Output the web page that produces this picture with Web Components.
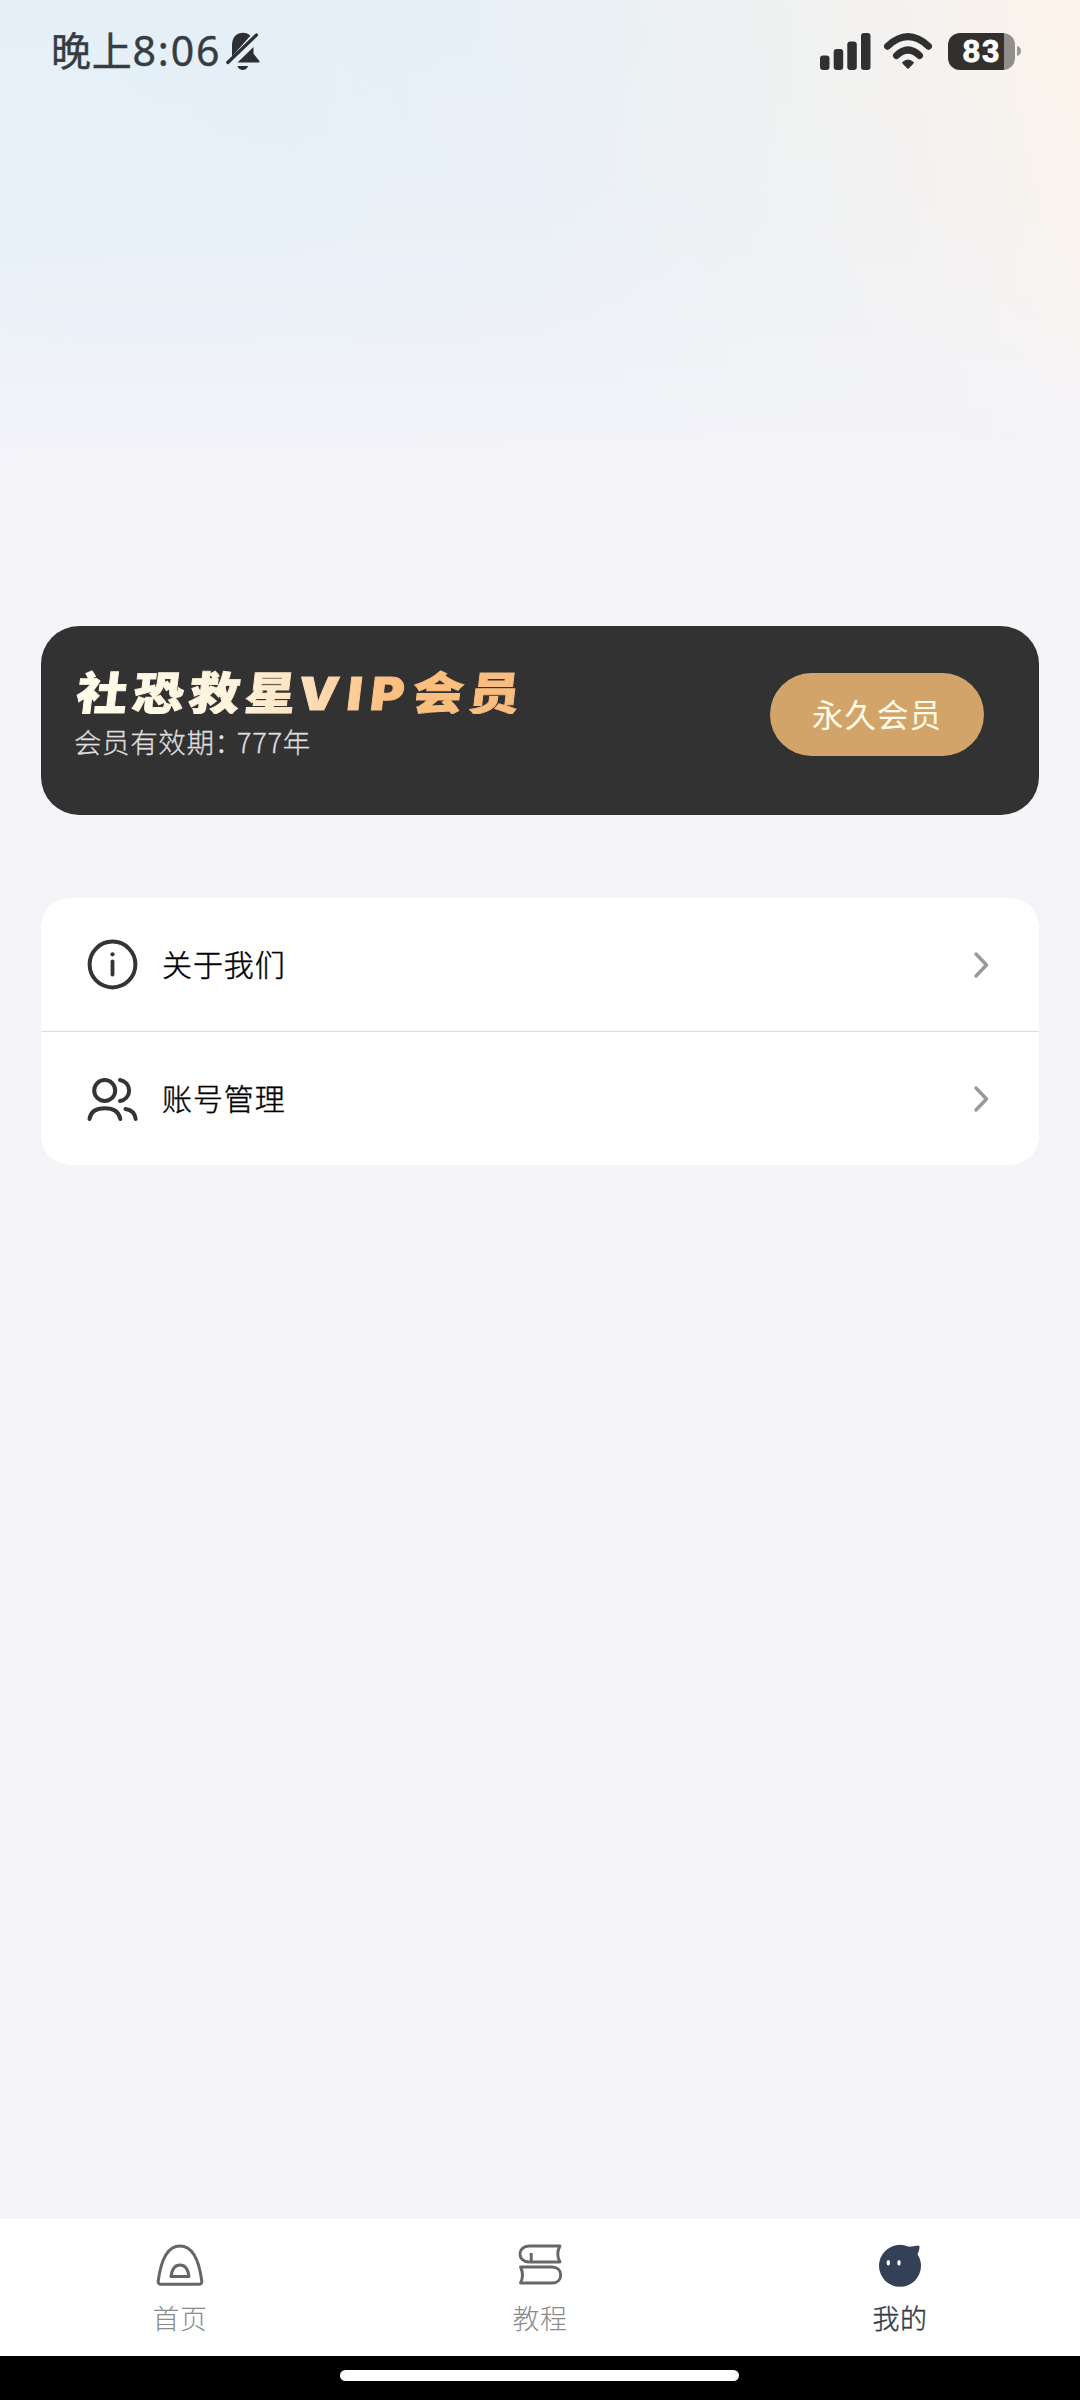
<!DOCTYPE html>
<html lang="zh-CN">
<head>
<meta charset="utf-8">
<title>我的</title>
<style>
html,body{margin:0;padding:0;background:#f4f4f9}
body{width:1080px;height:2400px;overflow:hidden;font-family:"Noto Sans CJK SC",sans-serif}
</style>
</head>
<body>
<profile-page></profile-page>
<script>
const define = (name, html) => {
  const t = document.createElement('template');
  t.innerHTML = html;
  customElements.define(name, class extends HTMLElement {
    constructor() {
      super();
      this.attachShadow({mode: 'open'}).append(t.content.cloneNode(true));
    }
  });
};

define('status-bar', `
<style>
:host{display:flex;height:102px;box-sizing:border-box;padding:0 59px 0 51px;justify-content:space-between;align-items:center;color:#363c42}
.side{display:flex;align-items:center;height:102px}
.time{display:flex;align-items:baseline;font-size:40px;line-height:60px;white-space:nowrap;margin-bottom:3px;-webkit-text-stroke:.4px #363c42}
.zh{letter-spacing:.8px}
.num{font-family:"Noto Sans","Noto Sans CJK SC",sans-serif;font-size:41px;letter-spacing:1.8px}
svg{display:block}
.battery{display:flex;align-items:center;margin-left:16px}
.cell{display:flex;align-items:center;justify-content:center;box-sizing:border-box;width:67px;height:37px;padding-left:1px;border-radius:12px;background:linear-gradient(90deg,#332f2d 56px,#918e8b 56px);color:#fff;font:700 31px/37px "Liberation Sans",sans-serif;letter-spacing:2px;-webkit-text-stroke:.8px #fff}
</style>
<div class="side">
  <div class="time"><span class="zh">晚上</span><span class="num">8:06</span></div>
  <svg width="34" height="39" viewBox="0 0 34 39" style="margin-left:5px"><g fill="#2c3033"><path d="M6 24V13C6 5 11 .8 17 .8c3 0 5.500 1 7.400 3L6 24.500z"/><path d="M11.500 30.500L27.500 15v6.500l5.800 7.500c.7 1 .2 1.500-.7 1.500z"/><path d="M11.500 34h10.500c-1.300 5.300-9.200 5.300-10.500 0z"/></g><path d="M1.800 30.500L30.500 3" stroke="#2c3033" stroke-width="3.200" stroke-linecap="round"/></svg>
</div>
<div class="side">
  <svg width="51" height="37" viewBox="0 0 51 37" fill="#303030"><rect y="22.500" width="9.500" height="14.500" rx="3"/><rect x="13.700" y="16" width="9.500" height="21" rx="3"/><rect x="27.300" y="8.500" width="9.500" height="28.500" rx="3"/><rect x="41" width="9.500" height="37" rx="3"/></svg>
  <svg width="48" height="37" viewBox="0 0 48 37" style="margin-left:13px" fill="none" stroke="#303030"><path d="M3.500 12.500Q24-6.500 44.500 12.500" stroke-width="7" stroke-linecap="round" transform="translate(0 .7)"/><path d="M12.500 22.500Q24 11.500 35.500 22.500" stroke-width="7" stroke-linecap="round"/><path d="M18.500 29.500Q24 24.500 29.500 29.500Q29 31 24 35.500Q19 31 18.500 29.500z" fill="#303030" stroke-width="1"/></svg>
  <div class="battery"><div class="cell">83</div><svg width="6" height="12" viewBox="0 0 6 12"><path d="M2 1Q6 2 6 6T2 11z" fill="#999693"/></svg></div>
</div>`);

define('vip-card', `
<style>
:host{display:flex;box-sizing:border-box;height:189px;padding:0 55px 0 34px;border-radius:38px;background:#323232;justify-content:space-between;align-items:flex-start}
.info{display:flex;flex-direction:column;padding-top:37px}
.title{display:flex;width:456px;height:54px;align-items:baseline;margin-left:2px;font-weight:900;font-size:51px;line-height:54px;white-space:nowrap;letter-spacing:5.200px;color:transparent;-webkit-text-stroke:1px transparent;background:linear-gradient(90deg,#fffdec 0,#fff3dc 35%,#fde0bc 50%,#fdbf80 68%,#f7bd7e 100%);-webkit-background-clip:text;background-clip:text;transform:scaleY(.89) skewX(-6deg)}
.en{font-family:Inter,sans-serif;font-size:51px;letter-spacing:8.500px;margin-left:-3px}
.term{color:#dedede;font-size:27.500px;font-weight:300;line-height:36px;letter-spacing:.6px;margin:6px 0 0 -1px;white-space:nowrap;-webkit-text-stroke:.3px #dedede}
.colon{font-feature-settings:"halt";margin-right:8px}
.pill{display:flex;align-items:center;justify-content:center;box-sizing:border-box;width:214px;height:83px;padding-bottom:3px;margin-top:47px;border-radius:41.500px;background:#d3a469;color:#fffbe8;font-size:31.500px;letter-spacing:1px}
</style>
<div class="info">
  <div class="title"><span>社恐救星</span><span class="en">VIP</span><span>会员</span></div>
  <div class="term">会员有效期<span class="colon">：</span>777年</div>
</div>
<div class="pill"><slot></slot></div>`);

define('menu-row', `
<style>
:host{display:flex;box-sizing:border-box;height:133px;padding:0 49px 0 46px;align-items:center;background:#fff}
.label{flex:1;margin:0 0 3px 24px;color:#000;font-size:30px;font-weight:300;letter-spacing:.9px;line-height:44px;-webkit-text-stroke:.4px #000}
svg{display:block}
</style>
<slot name="icon"></slot>
<div class="label"><slot></slot></div>
<svg width="18" height="28" viewBox="0 0 18 28"><path d="M4 3L14.500 14L4 25" fill="none" stroke="#999" stroke-width="3.400" stroke-linecap="round" stroke-linejoin="round"/></svg>`);

define('menu-list', `
<style>
:host{display:flex;flex-direction:column;gap:1px;overflow:hidden;border-radius:28px;background:#dcdcdc}
</style><slot></slot>`);

define('tab-item', `
<style>
:host{display:flex;flex:1;flex-direction:column;align-items:center;padding-top:23px;color:#8b8b8b;font-size:27px;font-weight:300;line-height:40px;letter-spacing:.5px}
:host([active]){color:#333b4b;-webkit-text-stroke:.4px #333b4b}
.text{margin-top:10px}
</style><slot name="icon"></slot><div class="text"><slot></slot></div>`);

define('tab-bar', `
<style>:host{display:flex;height:137px;background:#fff}</style><slot></slot>`);

define('gesture-bar', `
<style>
:host{display:flex;height:44px;box-sizing:border-box;padding:14px 1px 0 0;justify-content:center;align-items:flex-start;background:#000}
.line{width:399px;height:11px;border-radius:6px;background:#fff}
</style><div class="line"></div>`);

define('profile-page', `
<style>
:host{display:flex;flex-direction:column;width:1080px;height:2400px;background:
 linear-gradient(180deg,rgba(244,244,249,0) 0,rgba(244,244,249,.15) 200px,rgba(244,244,249,.5) 330px,#f4f4f9 460px),
 linear-gradient(80deg,#e4f0f8 0,#e5eff7 30%,#e8eff6 50%,#edf1f2 68%,#f4f2f0 84%,#fdf4eb 100%) 0 0/100% 460px no-repeat,#f4f4f9}
main{flex:1;display:flex;flex-direction:column;padding:524px 41px 0}
menu-list{margin-top:83px}
svg{display:block}
</style>
<status-bar></status-bar>
<main>
  <vip-card>永久会员</vip-card>
  <menu-list>
    <menu-row>
      <svg slot="icon" width="51" height="51" viewBox="0 0 51 51" fill="none" stroke="#343434" stroke-width="4" stroke-linecap="round"><circle cx="25.500" cy="25.500" r="22.900"/><path d="M25.500 22.500V35.500" stroke-width="3.800"/><circle cx="25.500" cy="15.300" r="2.100" fill="#343434" stroke="none"/></svg>
      关于我们
    </menu-row>
    <menu-row>
      <svg slot="icon" width="51" height="51" viewBox="0 0 51 51" fill="none" stroke="#343434" stroke-width="4" stroke-linecap="round"><circle cx="17.700" cy="17.500" r="10.500"/><path d="M33 7a10.600 10.600 0 0 1 0 21M2.500 46C3.500 39 9 35.300 18 35.300s14 3.700 15.300 10.700M38.500 36C44 36.800 48 40.500 48.700 46"/></svg>
      账号管理
    </menu-row>
  </menu-list>
</main>
<tab-bar>
  <tab-item>
    <svg slot="icon" width="48" height="46" viewBox="0 0 48 46" fill="none" stroke="#666" stroke-width="3" stroke-linejoin="round"><path d="M24 4C12 4 5 18 2.200 39Q2 42.200 5 42.200H43Q46 42.200 45.800 39C43 18 36 4 24 4z"/><path d="M15 34.500C16 27 19.500 23 24 23s8 4 9 11.500z"/></svg>
    首页
  </tab-item>
  <tab-item>
    <svg slot="icon" width="48" height="46" viewBox="0 0 48 46" fill="none" stroke="#666" stroke-width="2.900" stroke-linejoin="round"><path d="M44 4H13C7.500 4 4 7.500 4 12S7.500 20 13 20H44Q39.500 12 44 4zM15.200 19.500V11"/><path d="M4.500 25H36C41.500 25 44.700 28.500 44.700 33s-3.200 8-8.700 8H4.500Q8.500 33 4.500 25z"/></svg>
    教程
  </tab-item>
  <tab-item active>
    <svg slot="icon" width="48" height="46" viewBox="0 0 48 46"><circle cx="24" cy="23.800" r="21" fill="#344058"/><path d="M29 5Q35 4.500 42.500 3.500Q44 3.500 43.500 6C43 9 42 11 41 13.500z" fill="#344058"/><ellipse cx="12.300" cy="20.700" rx="1.700" ry="2.800" fill="#fff"/><ellipse cx="23" cy="20.700" rx="1.700" ry="2.800" fill="#fff"/></svg>
    我的
  </tab-item>
</tab-bar>
<gesture-bar></gesture-bar>`);
</script>
</body>
</html>
